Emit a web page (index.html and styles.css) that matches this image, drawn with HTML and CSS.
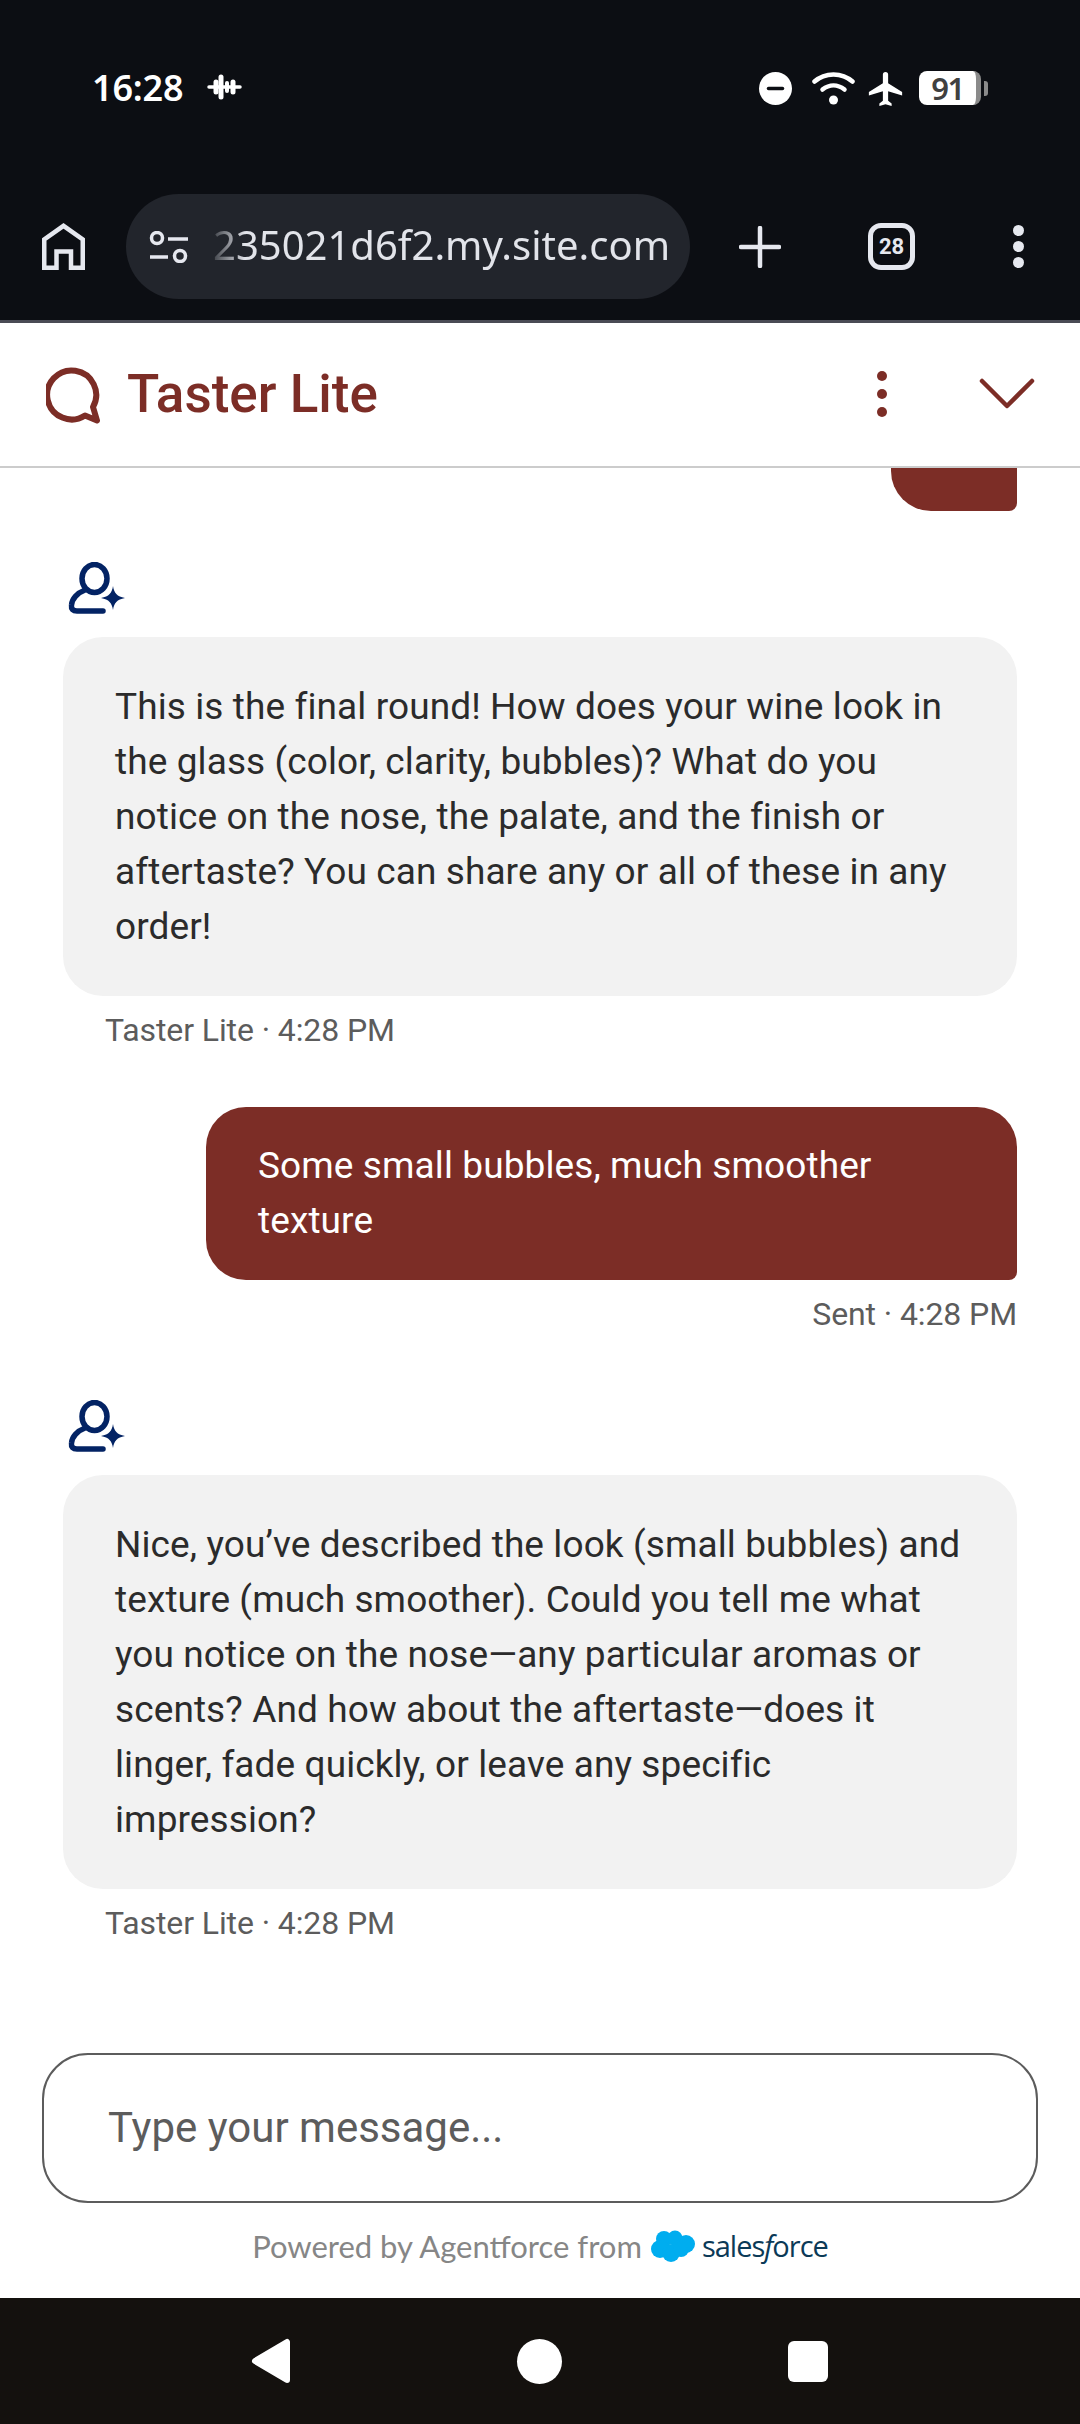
FILE: index.html
```html
<!DOCTYPE html>
<html lang="en">
<head>
    <meta charset="UTF-8">
    <meta name="viewport" content="width=device-width, initial-scale=1.0">
    <title>Taster Lite</title>
    <link rel="stylesheet" href="styles.css">
</head>
<body>
    <div class="browser-top">
        <div class="status-bar">
            <div class="status-left">
                <span class="clock">16:28</span>
                <svg class="wave" width="35" height="26" viewBox="0 0 35 26"><g stroke="#fff" stroke-linecap="round" fill="none"><path stroke-width="3.500" d="M2 13h31"/><path stroke-width="5" d="M14 3v20"/><path stroke-width="5" d="M9 8v10"/><path stroke-width="4" d="M20 9v8"/><path stroke-width="5" d="M26 8v10"/></g></svg>
            </div>
            <div class="status-right">
                <svg class="dnd-icon" width="33" height="33" viewBox="0 0 33 33"><circle cx="16.500" cy="16.500" r="16.500" fill="#fff"/><path d="M9.500 16.500h14" stroke="#0c0e13" stroke-width="3.500" stroke-linecap="round"/></svg>
                <svg class="wifi-icon" width="43" height="33" viewBox="0 0 43 33"><g fill="none" stroke="#fff" stroke-width="4.500" stroke-linecap="round"><path d="M2.500 9.500C13 0 30 0 40.500 9.500"/><path d="M10.500 17.500c7-5.500 15-5.500 22 0"/></g><circle cx="21.500" cy="28" r="4.500" fill="#fff"/></svg>
                <svg class="plane-icon" width="35" height="35" viewBox="2 1.500 20 20"><path fill="#fff" d="M21.500 15.500v-2l-8-5V3.500a1.500 1.500 0 0 0-3 0v5l-8 5v2l8-2.500v5.500l-2 1.500v1.500l3.500-1 3.500 1V20l-2-1.500V13z"/></svg>
                <div class="battery">
                    <span class="battery-body">91</span>
                    <span class="battery-tip"></span>
                </div>
            </div>
        </div>
        <div class="toolbar">
            <svg class="home-icon" width="43" height="47" viewBox="0 0 43 47"><path fill="none" stroke="#e6e8ef" stroke-width="4.500" d="M2.250 44.750V16.500L21.500 2.800l19.250 13.700v28.250H29V28.500H14.500v16.250z"/></svg>
            <div class="url-pill">
                <svg class="tune-icon" width="40" height="32" viewBox="0 0 40 32"><g fill="none" stroke="#e6e8ef" stroke-width="3.500"><circle cx="8" cy="7" r="5.500"/><circle cx="31" cy="25" r="5.500"/><path d="M19 8h20M1 26h18"/></g></svg>
                <span class="url-text">235021d6f2.my.site.com</span>
            </div>
            <svg class="plus-icon" width="42" height="42" viewBox="0 0 42 42"><path d="M21 2v38M2 21h38" stroke="#e6e8ef" stroke-width="4.500" stroke-linecap="round"/></svg>
            <span class="tab-count">28</span>
            <div class="dots dots-light"><i></i><i></i><i></i></div>
        </div>
    </div>

    <div class="chat-header">
        <svg class="chat-logo" width="56" height="57" viewBox="0 0 56 57"><path fill="none" stroke="#7c2d26" stroke-width="6" stroke-linejoin="round" d="M39 48.500A24.500 24.500 0 1 1 47 40l4 13.500z"/></svg>
        <h1 class="chat-title">Taster Lite</h1>
        <div class="dots dots-wine"><i></i><i></i><i></i></div>
        <svg class="chevron" width="56" height="32" viewBox="0 0 56 32"><path d="M3 3l25 25L53 3" fill="none" stroke="#7c2d26" stroke-width="4.500" stroke-linecap="round" stroke-linejoin="round"/></svg>
    </div>

    <div class="chat-area">
        <div class="bubble-stub"></div>

        <svg class="agent-icon" width="58" height="54" viewBox="0 0 58 54"><g fill="none" stroke="#032364" stroke-width="5.500" stroke-linecap="round"><ellipse cx="26.500" cy="16.500" rx="12.500" ry="14"/><path d="M17 28C9 31 4 37 3.500 43c-.5 4 1.500 6 5.500 6h26"/></g><path fill="#032364" d="M45 24c1 7 4 10.500 12 12-8 1.500-11 5-12 12-1-7-4-10.500-12-12 8-1.500 11-5 12-12z"/></svg>
        <div class="bubble bubble-agent">This is the final round! How does your wine look in the glass (color, clarity, bubbles)? What do you notice on the nose, the palate, and the finish or aftertaste? You can share any or all of these in any order!</div>
        <div class="meta meta-agent">Taster Lite · 4:28 PM</div>

        <div class="bubble bubble-user">Some small bubbles, much smoother texture</div>
        <div class="meta meta-user">Sent · 4:28 PM</div>

        <svg class="agent-icon agent-icon-next" width="58" height="54" viewBox="0 0 58 54"><g fill="none" stroke="#032364" stroke-width="5.500" stroke-linecap="round"><ellipse cx="26.500" cy="16.500" rx="12.500" ry="14"/><path d="M17 28C9 31 4 37 3.500 43c-.5 4 1.500 6 5.500 6h26"/></g><path fill="#032364" d="M45 24c1 7 4 10.500 12 12-8 1.500-11 5-12 12-1-7-4-10.500-12-12 8-1.500 11-5 12-12z"/></svg>
        <div class="bubble bubble-agent">Nice, you’ve described the look (small bubbles) and texture (much smoother). Could you tell me what you notice on the nose—any particular aromas or scents? And how about the aftertaste—does it linger, fade quickly, or leave any specific impression?</div>
        <div class="meta meta-agent">Taster Lite · 4:28 PM</div>
    </div>

    <div class="composer">
        <div class="message-input">Type your message...</div>
        <div class="powered">
            <span class="powered-text">Powered by Agentforce from</span>
            <svg class="cloud" width="44" height="32" viewBox="0 0 44 32"><g fill="#00adef"><circle cx="13" cy="9" r="8"/><circle cx="24" cy="8" r="7.500"/><circle cx="35" cy="14" r="9"/><circle cx="9" cy="19" r="9"/><circle cx="20" cy="23" r="9"/><circle cx="30" cy="19" r="8"/></g></svg>
            <span class="brand">sales<em>f</em>orce</span>
        </div>
    </div>

    <div class="nav-bar">
        <svg width="40" height="46" viewBox="0 0 40 46"><path fill="#fff" stroke="#fff" stroke-width="6" stroke-linejoin="round" d="M36 4v38L4 23z"/></svg>
        <span class="nav-home"></span>
        <span class="nav-square"></span>
    </div>
</body>
</html>
```

FILE: styles.css
```css
* {
    box-sizing: border-box;
}

body {
    font-family: Roboto, Arial, sans-serif;
    background-color: #ffffff;
    margin: 0;
    padding: 0;
    width: 1080px;
    height: 2424px;
    display: flex;
    flex-direction: column;
    overflow: hidden;
}

.browser-top {
    background-color: #0c0e13;
    height: 323px;
    flex-shrink: 0;
    border-bottom: 3px solid #4a4b55;
}

.status-bar {
    height: 154px;
    padding: 0 92px;
    display: flex;
    justify-content: space-between;
    align-items: flex-start;
}

.status-left {
    display: flex;
    align-items: center;
    gap: 24px;
    height: 34px;
    margin-top: 70px;
}

.clock {
    font-family: "Noto Sans", Roboto, sans-serif;
    color: #ffffff;
    font-size: 36px;
    font-weight: 600;
    letter-spacing: -0.2px;
}

.status-right {
    display: flex;
    align-items: center;
    height: 36px;
    margin-top: 70px;
}

.wifi-icon {
    margin-left: 20px;
}

.plane-icon {
    margin-left: 13px;
}

.battery {
    display: flex;
    align-items: center;
    gap: 3px;
    margin-left: 16px;
}

.battery-body {
    width: 62px;
    height: 34px;
    background-color: #ffffff;
    border-right: 5px solid #8a8a8a;
    border-radius: 8px;
    color: #404040;
    font-family: "Noto Sans", Roboto, sans-serif;
    font-size: 31px;
    font-weight: 600;
    letter-spacing: -1.5px;
    line-height: 34px;
    text-align: center;
}

.battery-tip {
    width: 4px;
    height: 15px;
    background-color: #8a8a8a;
    border-radius: 0 3px 3px 0;
}

.toolbar {
    height: 105px;
    margin-top: 40px;
    display: flex;
    align-items: center;
    padding-left: 42px;
}

.home-icon {
    flex-shrink: 0;
}

.url-pill {
    width: 564px;
    height: 105px;
    margin-left: 41px;
    padding-left: 23px;
    background-color: #22252c;
    border-radius: 53px;
    display: flex;
    align-items: center;
    gap: 24px;
    flex-shrink: 0;
}

.tune-icon {
    flex-shrink: 0;
}

.url-text {
    font-family: "Noto Sans", Roboto, sans-serif;
    color: #e2e4ea;
    font-size: 40px;
    padding-bottom: 4px;
    white-space: nowrap;
    -webkit-mask-image: linear-gradient(90deg, rgba(0, 0, 0, 0.15), #000 32px);
    mask-image: linear-gradient(90deg, rgba(0, 0, 0, 0.15), #000 32px);
}

.plus-icon {
    margin-left: 49px;
    flex-shrink: 0;
}

.tab-count {
    width: 47px;
    height: 47px;
    margin-left: 87px;
    border: 5px solid #e6e8ef;
    border-radius: 13px;
    color: #e6e8ef;
    font-size: 22px;
    font-weight: 700;
    line-height: 37px;
    text-align: center;
    flex-shrink: 0;
}

.dots {
    display: flex;
    flex-direction: column;
}

.dots i {
    display: block;
    border-radius: 50%;
}

.dots-light {
    margin-left: 98px;
    gap: 5px;
}

.dots-light i {
    width: 11px;
    height: 11px;
    background-color: #e6e8ef;
}

.chat-header {
    height: 145px;
    flex-shrink: 0;
    padding-bottom: 2px;
    border-bottom: 2px solid #cccccc;
    display: flex;
    align-items: center;
    padding-left: 46px;
}

.chat-logo {
    flex-shrink: 0;
    margin-top: 3px;
}

.chat-title {
    margin: 0 0 0 25px;
    color: #7c2d26;
    font-size: 53px;
    font-weight: 500;
    flex: 1;
}

.dots-wine {
    gap: 8px;
    margin-right: 92px;
}

.dots-wine i {
    width: 10px;
    height: 10px;
    background-color: #7c2d26;
}

.chevron {
    margin-right: 45px;
}

.chat-area {
    flex: 1;
    padding: 0 63px;
    display: flex;
    flex-direction: column;
    overflow: hidden;
}

.bubble-stub {
    align-self: flex-end;
    width: 126px;
    height: 43px;
    flex-shrink: 0;
    background-color: #7c2d26;
    border-radius: 0 0 8px 40px;
}

.agent-icon {
    margin-top: 51px;
    margin-left: 5px;
    margin-bottom: 21px;
    flex-shrink: 0;
}

.agent-icon-next {
    margin-top: 68px;
}

.bubble {
    font-size: 37px;
    line-height: 55px;
    letter-spacing: 0.1px;
}

.bubble-agent {
    padding: 42px 52px;
    background-color: #f2f2f2;
    color: #2b2b2b;
    border-radius: 40px;
}

.bubble-user {
    align-self: flex-end;
    width: 811px;
    margin-top: 59px;
    padding: 31px 52px 32px;
    background-color: #7c2d26;
    color: #ffffff;
    border-radius: 40px 40px 8px 40px;
}

.meta {
    color: #5c5c5c;
    font-size: 32px;
    letter-spacing: -0.1px;
    line-height: 36px;
    margin-top: 16px;
}

.meta-agent {
    margin-left: 42px;
}

.meta-user {
    align-self: flex-end;
}

.composer {
    flex-shrink: 0;
    padding: 0 42px;
}

.message-input {
    height: 150px;
    border: 2px solid #5c5c5c;
    border-radius: 46px;
    padding-left: 64px;
    color: #5c5c5c;
    font-size: 42px;
    line-height: 146px;
}

.powered {
    height: 95px;
    padding-bottom: 10px;
    display: flex;
    align-items: center;
    justify-content: center;
    color: #868686;
    font-family: Lato, sans-serif;
    font-size: 31px;
}

.cloud {
    margin: 0 7px 0 9px;
}

.brand {
    color: #0b3a57;
    font-family: "Open Sans", sans-serif;
    font-size: 29px;
    letter-spacing: -1px;
}

.nav-bar {
    height: 126px;
    flex-shrink: 0;
    background-color: #14110e;
    display: flex;
    align-items: center;
    justify-content: space-between;
    padding: 0 252px 0 251px;
}

.nav-home {
    width: 45px;
    height: 45px;
    background-color: #ffffff;
    border-radius: 50%;
}

.nav-square {
    width: 40px;
    height: 41px;
    background-color: #ffffff;
    border-radius: 6px;
}
```
